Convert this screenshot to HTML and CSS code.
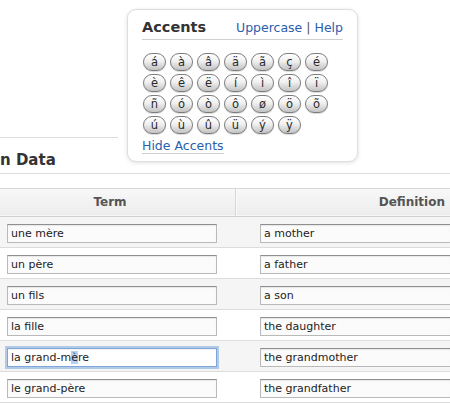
FILE: index.html
```html
<!DOCTYPE html>
<html>
<head>
<meta charset="utf-8">
<link rel="stylesheet" href="styles.css">
</head>
<body>
<div class="page">
  <div class="topline"></div>
  <h2 class="title">n Data</h2>
  <div class="table">
    <div class="th th-term">Term</div>
    <div class="th th-def">Definition</div>

    <div class="td odd"><div class="field">une mère</div></div>
    <div class="td td-def odd"><div class="field wide">a mother</div></div>

    <div class="td"><div class="field">un père</div></div>
    <div class="td td-def"><div class="field wide">a father</div></div>

    <div class="td odd"><div class="field">un fils</div></div>
    <div class="td td-def odd"><div class="field wide">a son</div></div>

    <div class="td"><div class="field">la fille</div></div>
    <div class="td td-def"><div class="field wide">the daughter</div></div>

    <div class="td odd"><div class="field focus">la grand-m<span class="sel">è</span>re</div></div>
    <div class="td td-def odd"><div class="field wide">the grandmother</div></div>

    <div class="td"><div class="field">le grand-père</div></div>
    <div class="td td-def"><div class="field wide">the grandfather</div></div>
  </div>
</div>

<div class="accents">
  <div class="acc-head">
    <span class="acc-title">Accents</span>
    <span class="acc-links"><a class="link">Uppercase</a> <span class="sep">|</span> <a class="link">Help</a></span>
  </div>
  <div class="keys">
    <span class="key">á</span><span class="key">à</span><span class="key">â</span><span class="key">ä</span><span class="key">ã</span><span class="key">ç</span><span class="key">é</span>
    <span class="key">è</span><span class="key">ê</span><span class="key">ë</span><span class="key">í</span><span class="key">ì</span><span class="key">î</span><span class="key">ï</span>
    <span class="key">ñ</span><span class="key">ó</span><span class="key">ò</span><span class="key">ô</span><span class="key">ø</span><span class="key">ö</span><span class="key">õ</span>
    <span class="key">ú</span><span class="key">ù</span><span class="key">û</span><span class="key">ü</span><span class="key">ý</span><span class="key">ÿ</span>
  </div>
  <a class="link hide">Hide Accents</a>
</div>
</body>
</html>
```

FILE: styles.css
```css
html, body {
  margin: 0;
  padding: 0;
  background: #fff;
  overflow: hidden;
}
body {
  font-family: "DejaVu Sans", Verdana, sans-serif;
  color: #222;
  width: 450px;
  height: 403px;
  position: relative;
}
.page {
  width: 450px;
}
.topline {
  width: 118px;
  height: 137px;
  border-bottom: 1px solid #dcdcdc;
}
.title {
  margin: 12px 0 0 0;
  padding: 0 0 3px 0;
  font-size: 15px;
  line-height: 20px;
  font-weight: bold;
  color: #333;
  border-bottom: 1px solid #dcdcdc;
}
.table {
  margin-top: 14px;
  display: grid;
  grid-template-columns: 235px 215px;
}
.th {
  height: 27px;
  line-height: 27px;
  font-size: 12px;
  font-weight: bold;
  color: #555;
  background: linear-gradient(#f8f8f8, #ececec);
  border-top: 1px solid #d8d8d8;
  border-bottom: 1px solid #d0d0d0;
  box-shadow: inset 0 -1px 0 #f7f7f7;
}
.th-term {
  text-align: center;
  padding-right: 15px;
}
.th-def {
  text-align: right;
  padding-right: 5px;
  border-left: 1px solid #d6d6d6;
  box-shadow: inset 1px 0 0 #fafafa, inset 0 -1px 0 #f7f7f7;
}
.td {
  padding: 7px 0 4px 7px;
  border-bottom: 1px solid #dcdcdc;
  background: #fff;
  overflow: hidden;
}
.td-def {
  padding-left: 25px;
}
.td.odd {
  background: #f5f5f5;
}
.field {
  box-sizing: border-box;
  width: 210px;
  height: 19px;
  padding: 0 3px;
  font-size: 11px;
  line-height: 17px;
  color: #222;
  background: #fbfbfb;
  border: 1px solid #b9b9b9;
  border-top-color: #8f8f8f;
  box-shadow: inset 0 1px 1px rgba(0,0,0,0.08);
  white-space: nowrap;
  overflow: hidden;
}
.field.wide {
  width: 190px;
  border-right: none;
}
.field.focus {
  background: #fff;
  border: 1px solid #7ea6d8;
  box-shadow: 0 0 0 2px rgba(120, 165, 220, 0.55), inset 0 1px 1px rgba(0,0,0,0.06);
}
.sel {
  background: #b6cff0;
}

/* Accents panel (overlay) */
.accents {
  position: absolute;
  left: 127px;
  top: 9px;
  width: 231px;
  height: 153px;
  box-sizing: border-box;
  padding: 8px 14px 0 14px;
  background: #fff;
  border: 1px solid #dedede;
  border-radius: 9px;
  box-shadow: 0 1px 4px rgba(0,0,0,0.12);
}
.acc-head {
  display: flex;
  justify-content: space-between;
  align-items: baseline;
  border-bottom: 1px solid #cfcfcf;
  padding-bottom: 2px;
  line-height: 18px;
}
.acc-title {
  font-size: 14.5px;
  font-weight: bold;
  color: #333;
}
.acc-links {
  font-size: 12.5px;
  white-space: nowrap;
}
.link {
  color: #2a5eae;
  text-decoration: none;
}
.sep {
  color: #555;
}
.keys {
  margin: 13px 0 0 1px;
  display: grid;
  grid-template-columns: repeat(7, 23px);
  grid-auto-rows: 18px;
  column-gap: 4px;
  row-gap: 3px;
}
.key {
  box-sizing: border-box;
  height: 18px;
  border: 1px solid #7c7c7c;
  border-radius: 9px;
  background: linear-gradient(#ffffff 0%, #f0f0f0 45%, #d6d6d6 75%, #c4c4c4 100%);
  box-shadow: inset 0 1px 0 #fff, 0 1px 1px rgba(0,0,0,0.15);
  font-size: 11.5px;
  line-height: 16px;
  text-align: center;
  color: #2a2a2a;
}
.hide {
  display: inline-block;
  margin-top: 4px;
  font-size: 12.5px;
  line-height: 15px;
  border-bottom: 1px solid #cfcfcf;
}
```
